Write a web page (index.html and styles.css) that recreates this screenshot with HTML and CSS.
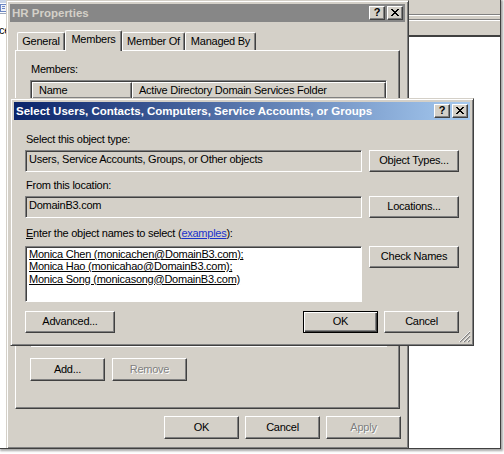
FILE: index.html
```html
<!DOCTYPE html>
<html>
<head>
<meta charset="utf-8">
<link rel="stylesheet" href="styles.css">
</head>
<body>
<div class="desktop">
  <div class="edge-strip">
    <svg class="edge-icon" width="7" height="14" viewBox="0 0 7 14"><rect x="0" y="0" width="7" height="3" fill="#c8d4e8"/><rect x="0.5" y="4.5" width="6" height="7" fill="#eef2fa" stroke="#6b86c4"/><rect x="2" y="6" width="3" height="1" fill="#6b86c4"/><rect x="2" y="8" width="3" height="1" fill="#6b86c4"/><rect x="0" y="13" width="7" height="1" fill="#9aa6bc"/></svg>
    <span class="edge-text">ce</span>
  </div>

  <div class="back-window">
    <div class="bw-rule"></div>
    <div class="bw-rule"></div>
  </div>

  <div class="win hr">
    <div class="titlebar inactive">
      <span class="title-text">HR Properties</span>
      <div class="caption-btns">
        <span class="cbtn">?</span>
        <span class="cbtn"><svg width="8" height="7" viewBox="0 0 8 7"><path d="M0 0h2v1h-2z M6 0h2v1h-2z M1 1h2v1h-2z M5 1h2v1h-2z M2 2h4v1h-4z M3 3h2v1h-2z M2 4h4v1h-4z M1 5h2v1h-2z M5 5h2v1h-2z M0 6h2v1h-2z M6 6h2v1h-2z" fill="#000"/></svg></span>
      </div>
    </div>
    <div class="tabs">
      <div class="tab t-general">General</div>
      <div class="tab t-members sel">Members</div>
      <div class="tab t-memberof">Member Of</div>
      <div class="tab t-managed">Managed By</div>
    </div>
    <div class="panel">
      <div class="plabel">Members:</div>
      <div class="listview">
        <div class="lv-head">
          <div class="lv-col lv-name">Name</div>
          <div class="lv-col lv-folder">Active Directory Domain Services Folder</div>
        </div>
      </div>
      <div class="panel-btns">
        <span class="btn">Add...</span>
        <span class="btn disabled">Remove</span>
      </div>
    </div>
    <div class="hr-foot">
      <span class="btn">OK</span>
      <span class="btn">Cancel</span>
      <span class="btn disabled">Apply</span>
    </div>
  </div>

  <div class="win dlg">
    <div class="titlebar active">
      <span class="title-text">Select Users, Contacts, Computers, Service Accounts, or Groups</span>
      <div class="caption-btns">
        <span class="cbtn">?</span>
        <span class="cbtn"><svg width="8" height="7" viewBox="0 0 8 7"><path d="M0 0h2v1h-2z M6 0h2v1h-2z M1 1h2v1h-2z M5 1h2v1h-2z M2 2h4v1h-4z M3 3h2v1h-2z M2 4h4v1h-4z M1 5h2v1h-2z M5 5h2v1h-2z M0 6h2v1h-2z M6 6h2v1h-2z" fill="#000"/></svg></span>
      </div>
    </div>
    <div class="dlg-body">
      <div class="dlabel">Select this object type:</div>
      <div class="drow">
        <div class="field ro">Users, Service Accounts, Groups, or Other objects</div>
        <span class="btn wide">Object Types...</span>
      </div>
      <div class="dlabel l2">From this location:</div>
      <div class="drow">
        <div class="field ro">DomainB3.com</div>
        <span class="btn wide">Locations...</span>
      </div>
      <div class="dlabel l3"><u>E</u>nter the object names to select (<a class="link">examples</a>):</div>
      <div class="drow">
        <div class="field names">
          <div class="name">Monica Chen (monicachen@DomainB3.com);</div>
          <div class="name">Monica Hao (monicahao@DomainB3.com);</div>
          <div class="name">Monica Song (monicasong@DomainB3.com)</div>
        </div>
        <span class="btn wide">Check Names</span>
      </div>
      <div class="dfoot">
        <span class="btn wide">Advanced...</span>
        <span class="spacer"></span>
        <span class="btn default">OK</span>
        <span class="btn">Cancel</span>
      </div>
    </div>
    <svg class="grip" width="12" height="12" viewBox="0 0 12 12">
      <path d="M11 1L1 11M11 5L5 11M11 9L9 11" stroke="#808080" stroke-width="1.2"/>
      <path d="M11 0L0 11M11 4L4 11M11 8L8 11" stroke="#ffffff" stroke-width="0.8"/>
    </svg>
  </div>

  <div class="frame"></div>
</div>
</body>
</html>
```

FILE: styles.css
```css
* { box-sizing: border-box; }

body {
  margin: 0;
  background: #ffffff;
  font-family: "Liberation Sans", Arial, sans-serif;
  font-size: 11px;
  line-height: 13px;
  letter-spacing: -0.25px;
  color: #000;
}

.desktop {
  position: relative;
  width: 504px;
  height: 454px;
  overflow: hidden;
  background: #ffffff;
}

/* left edge remnants of another window (partly hidden behind HR window) */
.edge-strip {
  position: absolute;
  left: 0;
  top: 0;
  width: 16px;
  height: 60px;
}
.edge-icon { display: block; }
.edge-text {
  display: block;
  margin-top: 10px;
  margin-left: -1px;
  font-size: 11px;
}

/* window behind on the right */
.back-window {
  position: absolute;
  left: 405px;
  top: 0;
  width: 96px;
  height: 37px;
  background: #d4d0c8;
  border-bottom: 2px solid #404040;
  padding-top: 14px;
}
.bw-rule {
  height: 2px;
  border-top: 1px solid #808080;
  border-bottom: 1px solid #ffffff;
  margin-bottom: 3px;
}

/* generic classic window */
.win {
  position: absolute;
  background: #d4d0c8;
  border: 1px solid;
  border-color: #d4d0c8 #404040 #404040 #d4d0c8;
  box-shadow: inset 1px 1px #ffffff, inset -1px -1px #808080;
  padding: 3px;
  display: flex;
  flex-direction: column;
}

.hr {
  left: 6px;
  top: 0;
  width: 403px;
  height: 449px;
}

.dlg {
  left: 10px;
  top: 98px;
  width: 464px;
  height: 248px;
}

.titlebar {
  height: 18px;
  display: flex;
  align-items: center;
  padding-left: 2px;
  flex: none;
}
.titlebar.inactive {
  background: #878787;
  color: #d4d0c8;
}
.titlebar.active {
  background: linear-gradient(to right, #0a246a, #a6caf0);
  color: #ffffff;
}
.title-text {
  font-weight: bold;
  font-size: 11.5px;
  letter-spacing: 0;
  white-space: nowrap;
}

.caption-btns {
  margin-left: auto;
  margin-right: 2px;
  display: flex;
  gap: 2px;
}
.cbtn {
  width: 16px;
  height: 14px;
  background: #d4d0c8;
  border: 1px solid;
  border-color: #ffffff #404040 #404040 #ffffff;
  box-shadow: inset -1px -1px #808080;
  display: flex;
  align-items: center;
  justify-content: center;
  font-weight: bold;
  font-size: 11px;
  line-height: 11px;
  letter-spacing: 0;
  color: #000;
  padding-bottom: 1px;
}

/* tabs */
.tabs {
  display: flex;
  align-items: flex-end;
  height: 20px;
  margin-top: 8px;
  padding-left: 7px;
  flex: none;
}
.tab {
  height: 18px;
  border: 1px solid;
  border-color: #ffffff #404040 transparent #ffffff;
  border-bottom: none;
  border-radius: 2px 2px 0 0;
  box-shadow: inset -1px 0 #808080;
  padding-top: 2px;
  text-align: center;
  background: #d4d0c8;
  white-space: nowrap;
}
.tab.sel {
  height: 21px;
  margin-bottom: -1px;
  position: relative;
  z-index: 1;
}
.t-general { width: 48px; }
.t-members { width: 57px; }
.t-memberof { width: 63px; }
.t-managed { width: 71px; }

.panel {
  margin: 0 5px;
  height: 359px;
  flex: none;
  border: 1px solid;
  border-color: #ffffff #404040 #404040 #ffffff;
  box-shadow: inset -1px -1px #808080;
  padding: 12px 0 0 14px;
}
.plabel { height: 13px; padding-left: 1px; }

.listview {
  margin-top: 4px;
  width: 357px;
  height: 267px;
  background: #ffffff;
  border: 1px solid;
  border-color: #808080 #ffffff #ffffff #808080;
  box-shadow: inset 1px 1px #404040;
  padding: 1px 0 0 1px;
}
.lv-head { display: flex; height: 17px; }
.lv-col {
  background: #d4d0c8;
  height: 17px;
  border: 1px solid;
  border-color: #ffffff #404040 #404040 #ffffff;
  box-shadow: inset -1px -1px #808080;
  padding: 1px 0 0 6px;
  white-space: nowrap;
}
.lv-name { width: 100px; }
.lv-folder { width: 254px; }

.panel-btns {
  display: flex;
  gap: 7px;
  margin-top: 11px;
}

.hr-foot {
  display: flex;
  justify-content: flex-end;
  gap: 6px;
  margin-top: 7px;
  padding-right: 4px;
}

/* buttons */
.btn {
  width: 75px;
  height: 23px;
  background: #d4d0c8;
  border: 1px solid;
  border-color: #ffffff #404040 #404040 #ffffff;
  box-shadow: inset -1px -1px #808080;
  display: flex;
  align-items: center;
  justify-content: center;
  padding-bottom: 1px;
  white-space: nowrap;
  flex: none;
}
.btn.disabled {
  color: #808080;
  text-shadow: 1px 1px #ffffff;
}
.btn.default {
  border: 1px solid #000;
  box-shadow: inset 1px 1px #ffffff, inset -1px -1px #404040, inset -2px -2px #808080;
}

/* dialog body */
.dlg-body {
  padding: 13px 11px 0 11px;
  display: flex;
  flex-direction: column;
}
.dlabel { height: 13px; padding-left: 1px; white-space: nowrap; }
.dlabel.l2 { margin-top: 7px; }
.dlabel.l3 { margin-top: 9px; }
.link { color: #1a33cc; text-decoration: underline; }

.drow {
  display: flex;
  gap: 7px;
  margin-top: 4px;
  align-items: flex-start;
}
.dlabel.l3 + .drow { margin-top: 6px; }
.drow .btn { height: 22px; }
.btn.wide { width: 90px; }

.field {
  width: 337px;
  height: 22px;
  border: 1px solid;
  border-color: #808080 #ffffff #ffffff #808080;
  box-shadow: inset 1px 1px #404040;
  padding: 2px 3px;
  white-space: nowrap;
  flex: none;
}
.field.ro { background: #d4d0c8; }
.field.names {
  height: 56px;
  background: #ffffff;
  padding: 1px 3px;
  line-height: 12.3px;
}
.name { text-decoration: underline; }

.dfoot {
  display: flex;
  gap: 6px;
  margin-top: 9px;
}
.dfoot .btn { height: 22px; }
.spacer { flex: 1; }

.grip {
  position: absolute;
  right: 2px;
  bottom: 2px;
}

/* screenshot frame: dark right/bottom edge with drop shadow */
.frame {
  position: absolute;
  left: -2px;
  top: -2px;
  width: 503px;
  height: 451px;
  border-right: 1px solid #404040;
  border-bottom: 1px solid #404040;
  box-shadow: 2px 2px 2px rgba(0,0,0,0.35);
  pointer-events: none;
}
```
